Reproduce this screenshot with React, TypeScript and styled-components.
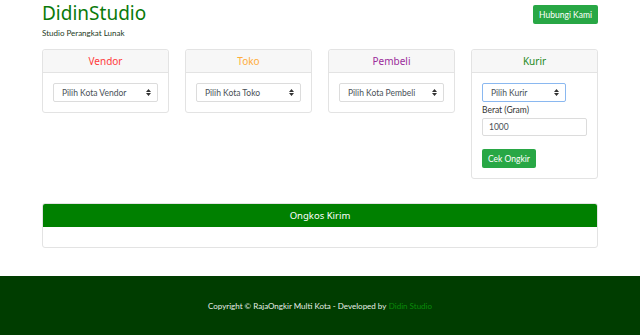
import styled, { createGlobalStyle } from 'styled-components';

const GlobalStyle = createGlobalStyle`
  html, body {
    margin: 0;
    padding: 0;
    background: #fff;
  }
  body {
    font-family: Lato, 'Noto Sans', sans-serif;
    font-weight: 400;
    color: #212529;
  }
`;

const locations = [
  { id: 'vendor', title: 'Vendor', color: '#ff3b3b', placeholder: 'Pilih Kota Vendor' },
  { id: 'toko', title: 'Toko', color: '#ffad3b', placeholder: 'Pilih Kota Toko' },
  { id: 'pembeli', title: 'Pembeli', color: '#9b2c9b', placeholder: 'Pilih Kota Pembeli' },
];

const Arrows = () => (
  <svg width="5" height="7" viewBox="0 0 5 7">
    <path d="M0 3 L2.5 0 L5 3 Z M0 4 L2.5 7 L5 4 Z" fill="#333" />
  </svg>
);

const App: React.FC = () => {
  return (
    <>
      <GlobalStyle />
      <Page>
        <Container>
          <Header>
            <Brand>
              <Title>DidinStudio</Title>
              <Subtitle>Studio Perangkat Lunak</Subtitle>
            </Brand>
            <Button>Hubungi Kami</Button>
          </Header>

          <Cards>
            {locations.map(loc => (
              <Card key={loc.id}>
                <CardHeader color={loc.color}>{loc.title}</CardHeader>
                <CardBody>
                  <SelectWrap>
                    <Select defaultValue="">
                      <option value="">{loc.placeholder}</option>
                    </Select>
                    <ArrowBox>
                      <Arrows />
                    </ArrowBox>
                  </SelectWrap>
                </CardBody>
              </Card>
            ))}
            <Card>
              <CardHeader color="#1e8a1e">Kurir</CardHeader>
              <CardBody>
                <SelectWrap $width="84px">
                  <Select defaultValue="" $focused>
                    <option value="">Pilih Kurir</option>
                  </Select>
                  <ArrowBox>
                    <Arrows />
                  </ArrowBox>
                </SelectWrap>
                <Label>Berat (Gram)</Label>
                <Input defaultValue="1000" />
                <SubmitButton>Cek Ongkir</SubmitButton>
              </CardBody>
            </Card>
          </Cards>

          <ResultPanel>
            <ResultHeader>Ongkos Kirim</ResultHeader>
            <ResultBody />
          </ResultPanel>
        </Container>

        <Footer>
          Copyright © RajaOngkir Multi Kota - Developed by <FooterLink>Didin Studio</FooterLink>
        </Footer>
      </Page>
    </>
  );
};

export default App;

const Page = styled.div`
  min-height: 335px;
  display: flex;
  flex-direction: column;
`;

const Container = styled.div`
  width: 556px;
  margin: 0 auto;
`;

const Header = styled.header`
  display: flex;
  justify-content: space-between;
  align-items: flex-start;
  padding-top: 1px;
`;

const Brand = styled.div`
  display: flex;
  flex-direction: column;
`;

const Title = styled.h1`
  margin: 0;
  font-family: 'Noto Sans', sans-serif;
  font-size: 19px;
  font-weight: 400;
  line-height: 24px;
  color: #0a7a0a;
`;

const Subtitle = styled.span`
  margin-top: 3px;
  font-size: 8px;
  line-height: 10px;
  color: #1d3b1d;
`;

const Button = styled.button`
  margin-top: 4px;
  height: 19px;
  padding: 0 6px;
  border: none;
  border-radius: 2px;
  background: #28a745;
  color: #fff;
  font-family: inherit;
  font-weight: 400;
  font-size: 8.5px;
  cursor: pointer;
`;

const Cards = styled.section`
  display: grid;
  grid-template-columns: repeat(4, 1fr);
  gap: 16px;
  align-items: start;
  margin-top: 11px;
`;

const Card = styled.div`
  border: 1px solid #e3e3e3;
  border-radius: 3px;
  background: #fff;
`;

const CardHeader = styled.div<{ color: string }>`
  height: 22px;
  line-height: 22px;
  text-align: center;
  font-family: 'Noto Sans', sans-serif;
  font-size: 10px;
  font-weight: 400;
  color: ${({ color }) => color};
  background: #f7f7f7;
  border-bottom: 1px solid #e3e3e3;
  border-radius: 3px 3px 0 0;
`;

const CardBody = styled.div`
  display: flex;
  flex-direction: column;
  align-items: flex-start;
  padding: 10px;
`;

const SelectWrap = styled.div<{ $width?: string }>`
  position: relative;
  width: ${({ $width }) => $width || '100%'};
`;

const Select = styled.select<{ $focused?: boolean }>`
  display: block;
  appearance: none;
  box-sizing: border-box;
  width: 100%;
  height: 19px;
  margin: 0;
  padding: 0 8px;
  border: 1px solid ${({ $focused }) => ($focused ? '#8ab8f0' : '#dcdcdc')};
  border-radius: 2px;
  background: #fff;
  font-family: inherit;
  font-weight: 400;
  font-size: 8.5px;
  color: #495057;
  outline: none;
`;

const ArrowBox = styled.span`
  position: absolute;
  right: 7px;
  top: 6px;
  display: flex;
  pointer-events: none;
`;

const Label = styled.label`
  margin-top: 3px;
  font-size: 8.5px;
  font-weight: 400;
  line-height: 11px;
  color: #333;
`;

const Input = styled.input`
  display: block;
  box-sizing: border-box;
  width: 100%;
  height: 18px;
  margin: 2px 0 0;
  padding: 0 6px;
  border: 1px solid #dcdcdc;
  border-radius: 2px;
  font-family: inherit;
  font-weight: 400;
  font-size: 8.5px;
  color: #495057;
  outline: none;
`;

const SubmitButton = styled.button`
  margin-top: 13px;
  height: 19px;
  padding: 0 6px;
  border: none;
  border-radius: 2px;
  background: #28a745;
  color: #fff;
  font-family: inherit;
  font-weight: 400;
  font-size: 8.5px;
  cursor: pointer;
`;

const ResultPanel = styled.section`
  margin-top: 24px;
  border: 1px solid #e3e3e3;
  border-radius: 3px;
  overflow: hidden;
`;

const ResultHeader = styled.div`
  height: 23px;
  line-height: 23px;
  text-align: center;
  background: #008000;
  color: #fff;
  font-family: 'Noto Sans', sans-serif;
  font-size: 9.5px;
  font-weight: 400;
`;

const ResultBody = styled.div`
  height: 20px;
`;

const Footer = styled.footer`
  margin-top: 28px;
  flex: 1;
  min-height: 60px;
  background: #003d00;
  color: #e8efe8;
  font-size: 8px;
  display: flex;
  align-items: center;
  justify-content: center;
`;

const FooterLink = styled.span`
  color: #0a8a0a;
  margin-left: 0.3em;
`;
